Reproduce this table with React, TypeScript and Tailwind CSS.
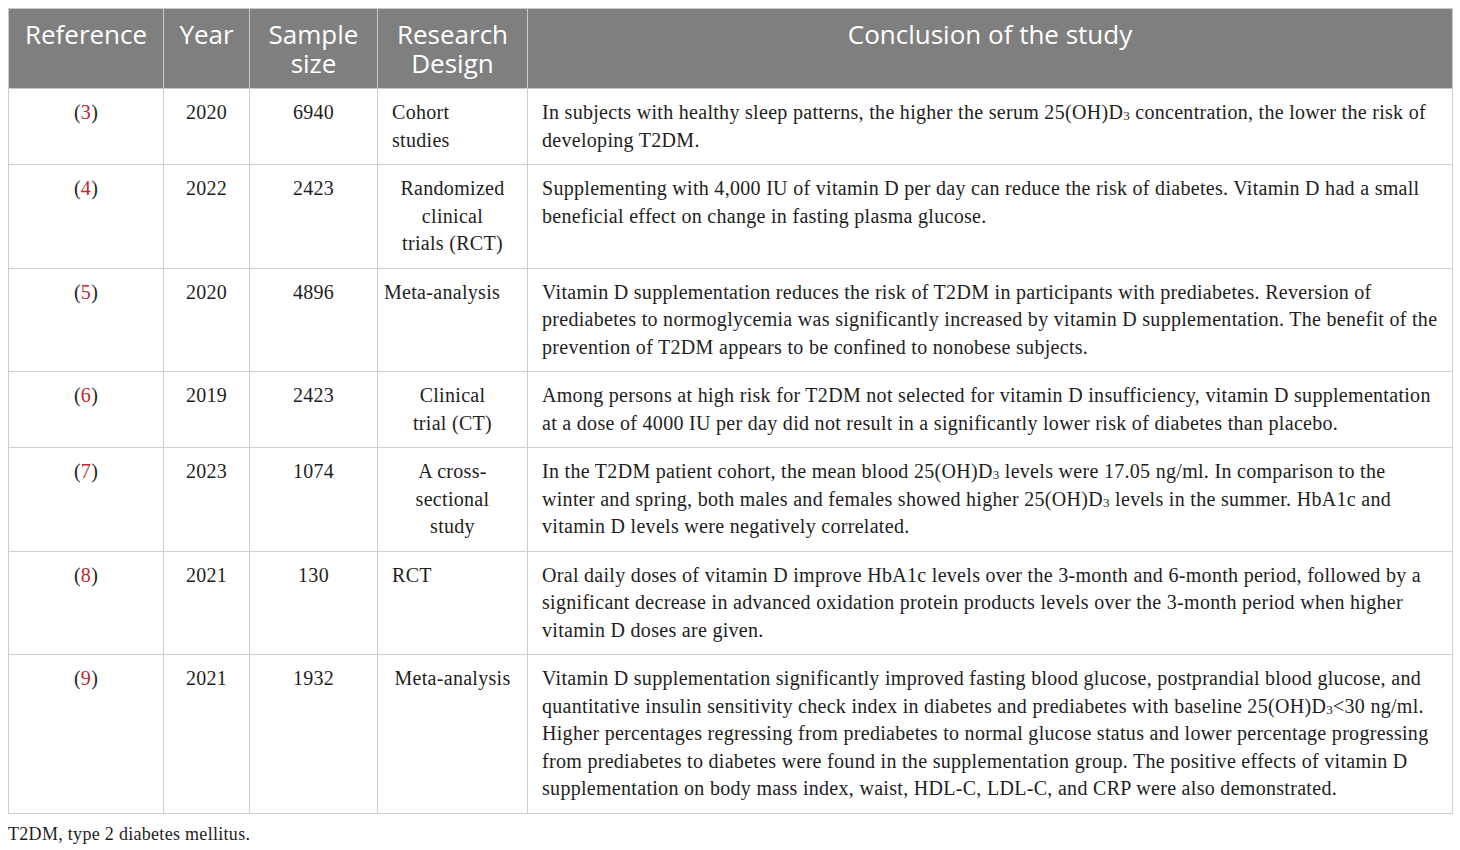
import React from "react";

type Row = {
  ref: string;
  year: string;
  size: string;
  design: string[];
  designClass: string;
  lines: React.ReactNode[];
};

const D3 = () => (
  <>
    D<sub className="text-[13px] relative top-[1px] align-baseline">3</sub>
  </>
);

const rows: Row[] = [
  {
    ref: "3",
    year: "2020",
    size: "6940",
    design: ["Cohort", "studies"],
    designClass: "text-left",
    lines: [
      <>In subjects with healthy sleep patterns, the higher the serum 25(OH)<D3 /> concentration, the lower the risk of</>,
      "developing T2DM.",
    ],
  },
  {
    ref: "4",
    year: "2022",
    size: "2423",
    design: ["Randomized", "clinical", "trials (RCT)"],
    designClass: "text-center",
    lines: [
      "Supplementing with 4,000 IU of vitamin D per day can reduce the risk of diabetes. Vitamin D had a small",
      "beneficial effect on change in fasting plasma glucose.",
    ],
  },
  {
    ref: "5",
    year: "2020",
    size: "4896",
    design: ["Meta-analysis"],
    designClass: "text-left !pl-[6px]",
    lines: [
      "Vitamin D supplementation reduces the risk of T2DM in participants with prediabetes. Reversion of",
      "prediabetes to normoglycemia was significantly increased by vitamin D supplementation. The benefit of the",
      "prevention of T2DM appears to be confined to nonobese subjects.",
    ],
  },
  {
    ref: "6",
    year: "2019",
    size: "2423",
    design: ["Clinical", "trial (CT)"],
    designClass: "text-center",
    lines: [
      "Among persons at high risk for T2DM not selected for vitamin D insufficiency, vitamin D supplementation",
      "at a dose of 4000 IU per day did not result in a significantly lower risk of diabetes than placebo.",
    ],
  },
  {
    ref: "7",
    year: "2023",
    size: "1074",
    design: ["A cross-", "sectional", "study"],
    designClass: "text-center",
    lines: [
      <>In the T2DM patient cohort, the mean blood 25(OH)<D3 /> levels were 17.05 ng/ml. In comparison to the</>,
      <>winter and spring, both males and females showed higher 25(OH)<D3 /> levels in the summer. HbA1c and</>,
      "vitamin D levels were negatively correlated.",
    ],
  },
  {
    ref: "8",
    year: "2021",
    size: "130",
    design: ["RCT"],
    designClass: "text-left",
    lines: [
      "Oral daily doses of vitamin D improve HbA1c levels over the 3-month and 6-month period, followed by a",
      "significant decrease in advanced oxidation protein products levels over the 3-month period when higher",
      "vitamin D doses are given.",
    ],
  },
  {
    ref: "9",
    year: "2021",
    size: "1932",
    design: ["Meta-analysis"],
    designClass: "text-center",
    lines: [
      "Vitamin D supplementation significantly improved fasting blood glucose, postprandial blood glucose, and",
      <>quantitative insulin sensitivity check index in diabetes and prediabetes with baseline 25(OH)<D3 />&lt;30 ng/ml.</>,
      "Higher percentages regressing from prediabetes to normal glucose status and lower percentage progressing",
      "from prediabetes to diabetes were found in the supplementation group. The positive effects of vitamin D",
      "supplementation on body mass index, waist, HDL-C, LDL-C, and CRP were also demonstrated.",
    ],
  },
];

const headCell =
  "border border-[#c9c9c9] bg-[#7f7f7f] text-white font-normal text-[26px] leading-[29px] text-center align-top pt-[11px] px-1";
const bodyCell = "border border-[#cfcfcf] align-top py-[10px] px-[14px]";

export default function App() {
  return (
    <div className="min-h-[850px] w-[1460px] bg-white px-2 pt-2 text-[#1e1e1e]">
      <table className="w-[1444px] table-fixed border-collapse">
        <colgroup>
          <col className="w-[155px]" />
          <col className="w-[86px]" />
          <col className="w-[128px]" />
          <col className="w-[150px]" />
          <col className="w-[925px]" />
        </colgroup>
        <thead>
          <tr className="h-[80px] font-['Open_Sans',sans-serif]">
            <th className={headCell}>Reference</th>
            <th className={headCell}>Year</th>
            <th className={headCell}>
              Sample
              <br />
              size
            </th>
            <th className={headCell}>
              Research
              <br />
              Design
            </th>
            <th className={headCell}>Conclusion of the study</th>
          </tr>
        </thead>
        <tbody className="font-['Liberation_Serif',serif] text-[20px] leading-[27.5px] tracking-[0.3px]">
          {rows.map((r) => (
            <tr key={r.ref}>
              <td className={`${bodyCell} text-center`}>
                (<span className="text-[#c0272d]">{r.ref}</span>)
              </td>
              <td className={`${bodyCell} text-center`}>{r.year}</td>
              <td className={`${bodyCell} text-center`}>{r.size}</td>
              <td className={`${bodyCell} ${r.designClass}`}>
                {r.design.map((d) => (
                  <div key={d} className="whitespace-nowrap">
                    {d}
                  </div>
                ))}
              </td>
              <td className={bodyCell}>
                {r.lines.map((l, i) => (
                  <div key={i} className="whitespace-nowrap">
                    {l}
                  </div>
                ))}
              </td>
            </tr>
          ))}
        </tbody>
      </table>
      <p className="mt-[8px] font-['Liberation_Serif',serif] text-[18px] leading-[24px] tracking-[0.3px]">
        T2DM, type 2 diabetes mellitus.
      </p>
    </div>
  );
}
